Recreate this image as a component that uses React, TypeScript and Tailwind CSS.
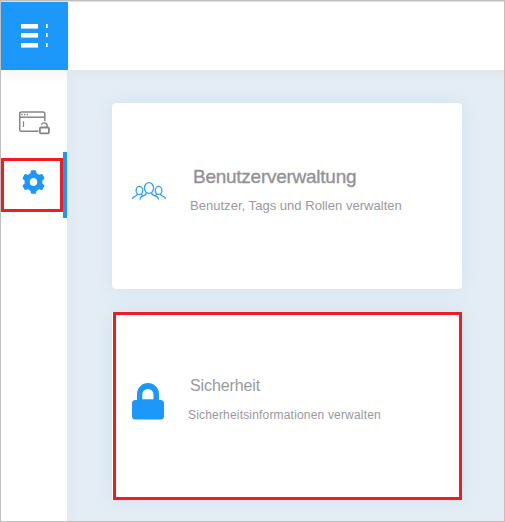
function LogoIcon() {
  return (
    <svg width="27" height="24" viewBox="0 0 27 24" fill="#fff" shapeRendering="crispEdges">
      <path d="M0 0h17v4H0zM0 9h17v4H0zM0 19h17v4H0z" />
      <path d="M25 0h1v4h-1zM25 9h1v4h-1zM25 19h1v4h-1z" />
      <path d="M0 4h17v1H0zM0 13h17v1H0zM0 23h17v1H0zM26 0h1v4h-1zM26 9h1v4h-1zM26 19h1v4h-1z" opacity=".6" />
    </svg>
  );
}

function WindowLockIcon() {
  return (
    <svg width="31" height="24" viewBox="0 0 31 24" fill="none" stroke="#858585" strokeWidth="1.5">
      <path d="M19.5 20.3H2.3Q.7 20.3.7 18.7V2.3Q.7.9 2.3.9H24Q25.8.9 25.8 2.5V10" />
      <path d="M1 6.2H25.5" />
      <path d="M2.3 3.5H9" strokeDasharray="1.5 1.2" />
      <path d="M4.5 10.3V16" strokeWidth="1.2" />
      <path d="M22.4 13.8A3 2.9 0 0 1 28.2 14.8V16" strokeWidth="1.4" />
      <rect x="20.9" y="16.5" width="9" height="5.8" rx="1" strokeWidth="1.8" />
    </svg>
  );
}

function GearIcon() {
  return (
    <svg width="23" height="24" viewBox="0 0 24 24" preserveAspectRatio="none" fill="#1b98f9" fillRule="evenodd">
      <path d="M9.2.8Q9.5.2 10.2.2H13.8Q14.5.2 14.7.9L15.3 3.7Q16.5 4.2 17.5 4.9L20.2 4Q21 3.8 21.4 4.4L23.3 7.7Q23.6 8.3 23 8.9L20.9 10.8Q21 12 20.9 13.2L23 15.1Q23.6 15.7 23.3 16.3L21.4 19.6Q21 20.2 20.2 20L17.5 19.1Q16.5 19.8 15.3 20.3L14.7 23.1Q14.5 23.8 13.8 23.8H10.2Q9.5 23.8 9.3 23.1L8.7 20.3Q7.5 19.8 6.5 19.1L3.8 20Q3 20.2 2.6 19.6L.7 16.3Q.4 15.7 1 15.1L3.1 13.2Q3 12 3.1 10.8L1 8.9Q.4 8.3.7 7.7L2.6 4.4Q3 3.8 3.8 4L6.5 4.9Q7.5 4.2 8.7 3.7ZM12 8A4 4 0 1 0 12 16A4 4 0 1 0 12 8Z" />
      <circle cx="12" cy="12" r="6.8" fill="none" stroke="#1b98f9" strokeWidth="5" />
    </svg>
  );
}

function UsersIcon() {
  return (
    <svg width="34" height="18" viewBox="0 0 34 18" fill="none" stroke="#2d9ff8" strokeWidth="1.3">
      <ellipse cx="17" cy="6.1" rx="4.6" ry="5.4" />
      <ellipse cx="7.4" cy="8.4" rx="3.3" ry="4" />
      <ellipse cx="26.6" cy="8.4" rx="3.3" ry="4" />
      <path d="M14.3 10.5Q14.3 12.5 12.6 13.2L9.6 14.7Q8 15.5 8 17.6" />
      <path d="M19.7 10.5Q19.7 12.5 21.4 13.2L24.8 14.7Q26.4 15.5 26.4 17.6" />
      <path d="M5.4 11.8Q5.2 13.4 3.7 14L1.9 14.8Q.6 15.3.6 16.8M9.2 11.7Q9.4 12.9 10.8 13.8" />
      <path d="M28.6 11.8Q28.8 13.4 30.3 14L32.1 14.8Q33.4 15.3 33.4 16.8M24.8 11.7Q24.6 12.9 23.2 13.8" />
    </svg>
  );
}

function LockIcon() {
  return (
    <svg width="32" height="37" viewBox="0 0 32 37" fill="#1b98f9">
      <path d="M5 17V11.2A11 11.2 0 0 1 27 11.2V17H28.5Q32 17 32 20.5V33Q32 36.5 28.5 36.5H3.5Q0 36.5 0 33V20.5Q0 17 3.5 17ZM10.3 16.2H21.5V11.5A5.6 5.6 0 0 0 10.3 11.5Z" />
    </svg>
  );
}

export default function App() {
  return (
    <div className="flex h-[522px] w-[505px] flex-col overflow-hidden border border-[#c0c0c0] bg-white font-['Liberation_Sans',Arial,sans-serif] text-[#99999d]">
      <header className="flex h-[69px] shrink-0 border-t border-[#dedede] bg-white">
        <div className="h-[68px] w-[67px] bg-[#1b98f9] pl-5 pt-[22px]">
          <LogoIcon />
        </div>
      </header>
      <div className="flex min-h-0 flex-1">
        <aside className="w-[66px] shrink-0 bg-[linear-gradient(#f7f7f7,#fff_14px)]">
          <div className="flex h-[82px] items-start pl-[18px] pt-[41px]">
            <WindowLockIcon />
          </div>
          <div className="flex h-[66px] items-center border-r-4 border-[#1b98f9]">
            <div className="h-[54px] w-[62px] border-[3px] border-[#ee1c25] pl-[18px] pt-[9px]">
              <GearIcon />
            </div>
          </div>
        </aside>
        <main className="flex flex-1 flex-col items-start gap-[23px] bg-[#e4edf5] bg-[linear-gradient(#e0e7ec,transparent_12px),linear-gradient(90deg,#e0e8f0,transparent_12px)] pl-[45px] pt-[33px]">
          <section className="flex h-[186px] w-[350px] rounded bg-white pl-5 shadow-[0_0_18px_#cee2f0]">
            <div className="w-[58px] shrink-0 pt-[79px]">
              <UsersIcon />
            </div>
            <div className="whitespace-nowrap pt-[63px]">
              <h2 className="pl-[3px] text-[19px] leading-[22px] tracking-[-0.26px] text-[#929297] [-webkit-text-stroke:0.35px_#929297]">Benutzerverwaltung</h2>
              <p className="mt-[10px] text-[13px] leading-[15px] tracking-[0.03px]">Benutzer, Tags und Rollen verwalten</p>
            </div>
          </section>
          <section className="h-[188px] w-[350px] bg-white pl-px shadow-[0_0_18px_#cee2f0]">
            <div className="flex h-full border-[3px] border-[#ee1c25] pl-4">
              <div className="w-14 shrink-0 pt-[68px]">
                <LockIcon />
              </div>
              <div className="whitespace-nowrap pt-[62px]">
                <h2 className="pl-[2px] text-[16px] leading-[18px] tracking-[-0.1px]">Sicherheit</h2>
                <p className="mt-[13px] text-[12px] leading-[15px] tracking-[0.18px]">Sicherheitsinformationen verwalten</p>
              </div>
            </div>
          </section>
        </main>
      </div>
    </div>
  );
}
